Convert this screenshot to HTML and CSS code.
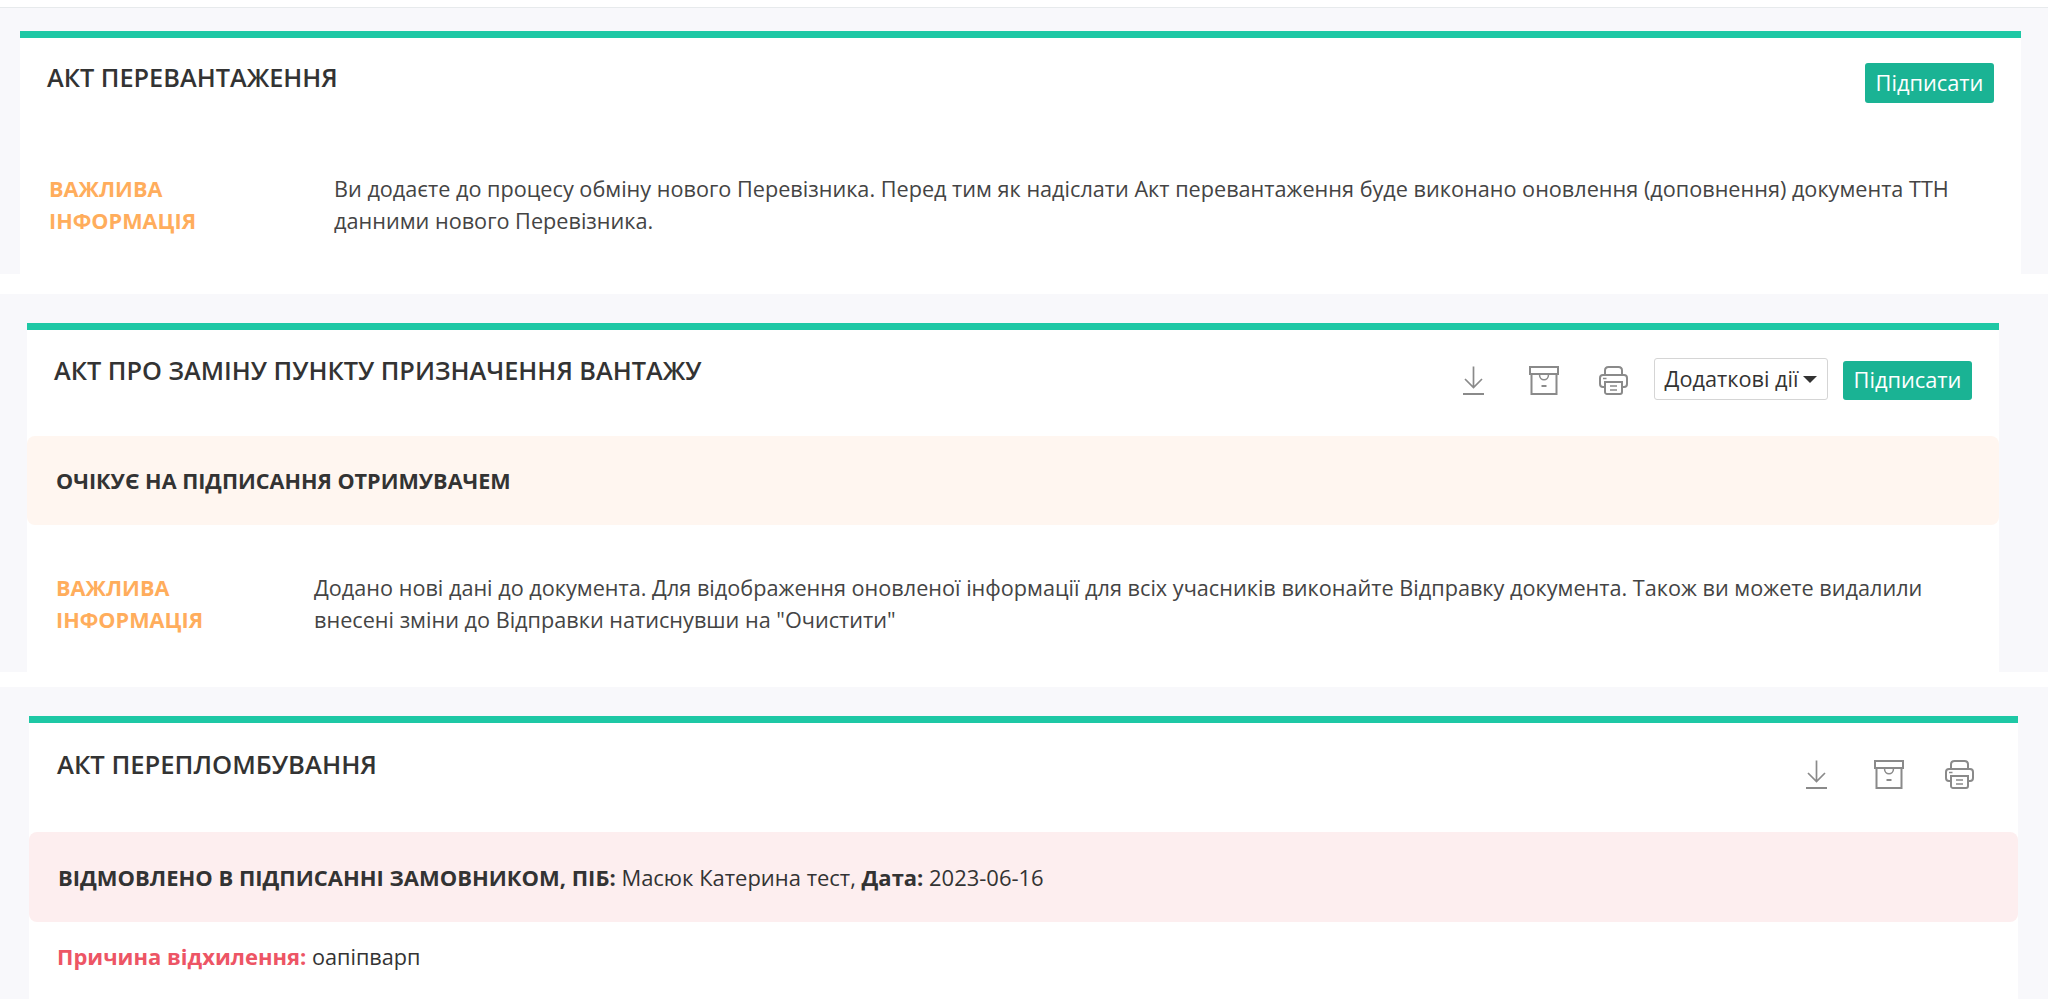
FILE: index.html
```html
<!DOCTYPE html>
<html lang="uk">
<head>
<meta charset="utf-8">
<title>Акти</title>
<link rel="stylesheet" href="styles.css">
</head>
<body>
<svg class="sprite" width="0" height="0" aria-hidden="true">
  <symbol id="i-download" viewBox="0 0 21 29">
    <path d="M10.5 0.5V21M2 13l8.5 8.5L19 13" fill="none" stroke="currentColor" stroke-width="1.7"/>
    <path d="M0 28h21" fill="none" stroke="currentColor" stroke-width="2"/>
  </symbol>
  <symbol id="i-archive" viewBox="0 0 30 29">
    <path d="M1 1h28v7H1zM2.500 8v20h25V8" fill="none" stroke="currentColor" stroke-width="2"/>
    <path d="M10.500 8.500c0 7 9 7 9 0" fill="none" stroke="currentColor" stroke-width="1.500"/>
    <path d="M12.500 20h5" fill="none" stroke="currentColor" stroke-width="2"/>
  </symbol>
  <symbol id="i-print" viewBox="0 0 29 29">
    <path d="M6 9V4.500C6 2.500 7.500 1 9.500 1h10C21.500 1 23 2.500 23 4.500V9" fill="none" stroke="currentColor" stroke-width="2"/>
    <path d="M6 21H4c-1.700 0-3-1.300-3-3v-6c0-1.700 1.300-3 3-3h21c1.700 0 3 1.300 3 3v6c0 1.700-1.300 3-3 3h-2" fill="none" stroke="currentColor" stroke-width="2"/>
    <path d="M6 16h17v10c0 1.100-.9 2-2 2H8c-1.100 0-2-.9-2-2z" fill="#fff" stroke="currentColor" stroke-width="2"/>
    <path d="M4 12.500h3.500M11 20h7M11 24h7" fill="none" stroke="currentColor" stroke-width="1.500"/>
  </symbol>
</svg>
<div class="topline"></div>

<section class="panel panel-a">
  <div class="card card-a">
    <header class="head head-a">
      <h2 class="title">АКТ ПЕРЕВАНТАЖЕННЯ</h2>
      <div class="actions"><button class="btn">Підписати</button></div>
    </header>
    <div class="info info-a">
      <div class="info-label">ВАЖЛИВА ІНФОРМАЦІЯ</div>
      <p class="info-text">Ви додаєте до процесу обміну нового Перевізника. Перед тим як надіслати Акт перевантаження буде виконано оновлення (доповнення) документа ТТН данними нового Перевізника.</p>
    </div>
  </div>
</section>

<section class="panel panel-b">
  <div class="card card-b">
    <header class="head head-b">
      <h2 class="title">АКТ ПРО ЗАМІНУ ПУНКТУ ПРИЗНАЧЕННЯ ВАНТАЖУ</h2>
      <div class="actions">
        <svg class="icon icon-download"><use href="#i-download"/></svg>
        <svg class="icon icon-archive"><use href="#i-archive"/></svg>
        <svg class="icon icon-print"><use href="#i-print"/></svg>
        <button class="menu">Додаткові дії<span class="caret"></span></button>
        <button class="btn">Підписати</button>
      </div>
    </header>
    <div class="alert alert-wait"><strong>ОЧІКУЄ НА ПІДПИСАННЯ ОТРИМУВАЧЕМ</strong></div>
    <div class="info info-b">
      <div class="info-label">ВАЖЛИВА ІНФОРМАЦІЯ</div>
      <p class="info-text">Додано нові дані до документа. Для відображення оновленої інформації для всіх учасників виконайте Відправку документа. Також ви можете видалили внесені зміни до Відправки натиснувши на "Очистити"</p>
    </div>
  </div>
</section>

<section class="panel panel-c">
  <div class="card card-c">
    <header class="head head-c">
      <h2 class="title">АКТ ПЕРЕПЛОМБУВАННЯ</h2>
      <div class="actions">
        <svg class="icon icon-download"><use href="#i-download"/></svg>
        <svg class="icon icon-archive"><use href="#i-archive"/></svg>
        <svg class="icon icon-print"><use href="#i-print"/></svg>
      </div>
    </header>
    <div class="alert alert-denied"><strong>ВІДМОВЛЕНО В ПІДПИСАННІ ЗАМОВНИКОМ, ПІБ:</strong> Масюк Катерина тест, <strong>Дата:</strong> 2023-06-16</div>
    <p class="reason"><strong>Причина відхилення:</strong> оапіпварп</p>
  </div>
</section>
</body>
</html>
```

FILE: styles.css
```css
* { box-sizing: border-box; }
html, body { margin: 0; height: 999px; overflow: hidden; background: #fff; }
body { font-family: "Open Sans", "Noto Sans", sans-serif; font-size: 21.66px; line-height: 32px; color: #444; }
.sprite { position: absolute; }
.topline { height: 8px; border-bottom: 1px solid #e7eaec; }

.panel { background: #f8f8fb; }
.panel-a { padding: 23px 27px 0 20px; }
.panel-b { margin-top: 20px; padding: 29px 49px 0 27px; }
.panel-c { margin-top: 15px; padding: 29px 30px 0 29px; height: 312px; }

.card { background: #fff; border-top: 7px solid #1ec8a5; }
.card-a { height: 243px; }
.card-b { height: 349px; }
.card-c { height: 283px; }

.head { display: flex; justify-content: space-between; align-items: flex-start; padding-top: 25px; }
.head-a { height: 135px; padding-left: 27px; padding-right: 27px; }
.head-b { height: 106px; padding-left: 27px; padding-right: 27px; padding-top: 28px; }
.head-c { height: 109px; padding-left: 28px; padding-right: 44px; padding-top: 37px; }

.title { margin: 0; font-size: 25.3px; line-height: 30px; font-weight: 600; color: #333; }
.head-a .title { margin-top: -1px; }
.head-b .title { margin-top: -3px; }
.head-c .title { margin-top: -10px; font-size: 25.6px; }

.actions { display: flex; align-items: center; }
.icon { display: block; height: 29px; color: #8a8a8a; }
.head-b .icon { margin-top: 3px; }
.icon-download { width: 21px; }
.icon-archive { width: 30px; margin-left: 45px; }
.icon-print { width: 29px; margin-left: 40px; }
.head-c .icon-archive { margin-left: 47px; }
.head-c .icon-print { margin-left: 41px; }

.btn { height: 40px; width: 129px; padding: 0; border: 0; border-radius: 3px; background: #1ab394; color: #fff; font: 21.8px/38px "Open Sans", sans-serif; }
.head-b .btn { margin-top: 2px; height: 39px; }
.menu { display: flex; align-items: center; justify-content: center; height: 42px; width: 174px; margin-left: 26px; margin-right: 15px; padding: 0; border: 1px solid #d5d5d5; border-radius: 3px; background: #fff; color: #333; font: 21.7px/38px "Open Sans", sans-serif; white-space: nowrap; }
.caret { width: 0; height: 0; margin-left: 5px; border-left: 7px solid transparent; border-right: 7px solid transparent; border-top: 7px solid #333; }

.alert { border-radius: 8px; color: #333; }
.alert-wait { height: 89px; padding: 29px 0 0 29px; background: #fff6f0; font-size: 21.6px; }
.alert-denied { height: 90px; padding: 30px 0 0 29px; background: #fdeeef; font-size: 21.98px; }

.info { display: grid; }
.info-a { grid-template-columns: 285px 1fr; padding: 0 27px 0 29px; }
.info-b { grid-template-columns: 258px 1fr; margin-top: 47px; padding: 0 27px 0 29px; }
.info-label { font-weight: 700; color: #ffad5c; width: 170px; }
.info-text { margin: 0; }

.reason { margin: 18px 0 0; padding-left: 28px; color: #333; }
.reason strong { color: #ed5565; font-size: 22px; }
```
